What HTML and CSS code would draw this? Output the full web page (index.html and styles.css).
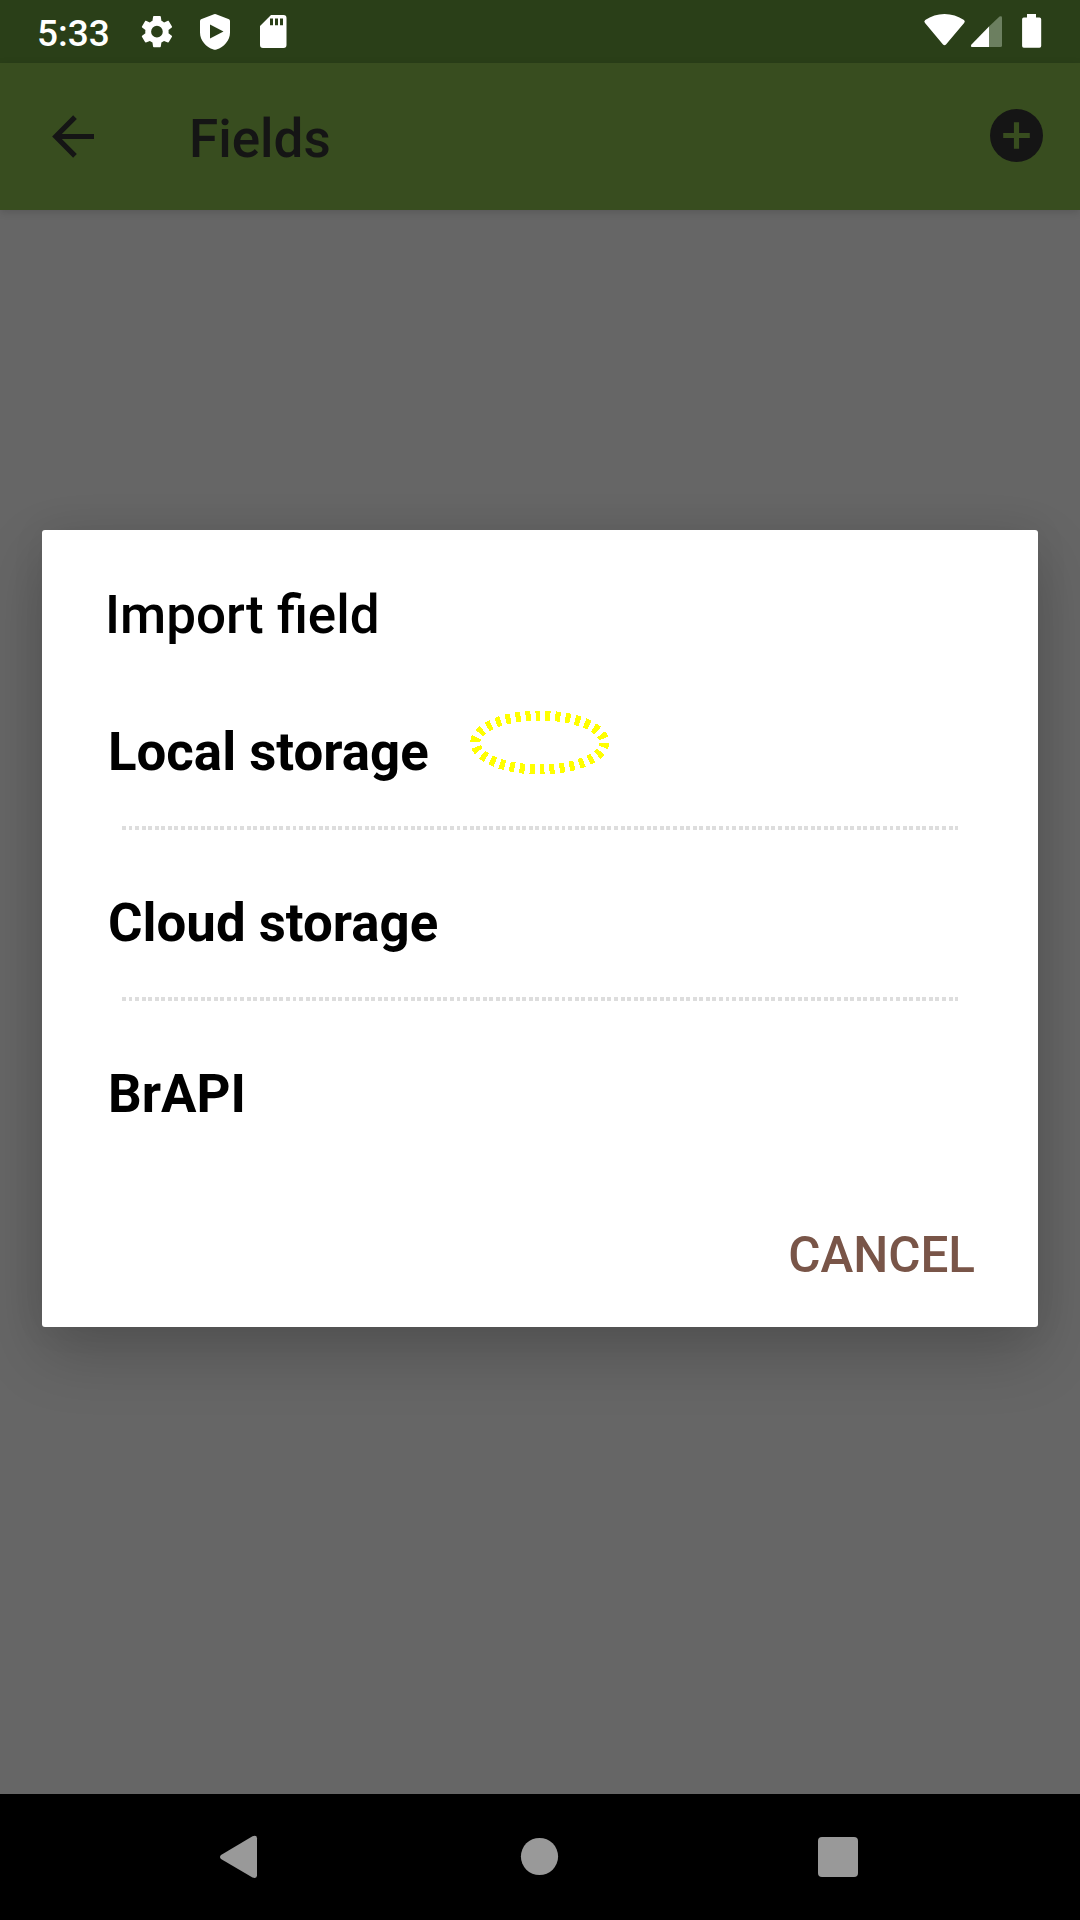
FILE: index.html
```html
<!DOCTYPE html>
<html lang="en">
<head>
<meta charset="utf-8">
<title>Fields</title>
<link rel="stylesheet" href="styles.css">
</head>
<body>
<div class="screen">
  <header class="status">
    <span class="clock">5:33</span>
    <svg class="status-icons" width="160" height="63" viewBox="130 0 160 63">
      <g transform="translate(137.500 12.200) scale(1.62)"><path fill="#fff" d="M19.14 12.94c.04-.3.06-.61.06-.94 0-.32-.02-.64-.07-.94l2.03-1.58c.18-.14.23-.41.12-.61l-1.92-3.32c-.12-.22-.37-.29-.59-.22l-2.39.96c-.5-.38-1.03-.7-1.62-.94l-.36-2.54c-.04-.24-.24-.41-.48-.41h-3.84c-.24 0-.43.17-.47.41l-.36 2.54c-.59.24-1.13.57-1.62.94l-2.39-.96c-.22-.08-.47 0-.59.22L2.74 8.87c-.12.21-.08.47.12.61l2.03 1.58c-.05.3-.09.63-.09.94s.02.64.07.94l-2.03 1.58c-.18.14-.23.41-.12.61l1.92 3.32c.12.22.37.29.59.22l2.39-.96c.5.38 1.03.7 1.62.94l.36 2.54c.05.24.24.41.48.41h3.84c.24 0 .44-.17.47-.41l.36-2.54c.59-.24 1.13-.56 1.62-.94l2.39.96c.22.08.47 0 .59-.22l1.92-3.32c.12-.22.07-.47-.12-.61zM12 15.6A3.6 3.6 0 1 1 12 8.4a3.6 3.6 0 0 1 0 7.2z"/></g>
      <path fill="#fff" fill-rule="evenodd" d="M214 14.2q1-.6 2 0l13 5q1 .6 1 2v11.3c0 8-6 14.500-13.500 17q-1.500.6-3 0C206 47 200 40.500 200 32.500V21.200q0-1.400 1-2zM210 24.500V38.500L223.500 31.500z"/>
      <path fill="#fff" fill-rule="evenodd" d="M271 15h12.500q3 0 3 3v27q0 3-3 3H263q-3 0-3-3V26zM270 18.500V25.300h3V18.500zM275 18.500V25.300h3V18.500zM280 18.500V25.300h3V18.500z"/>
    </svg>
    <svg class="signal-icons" width="160" height="63" viewBox="920 0 160 63">
      <path fill="#fff" d="M925 23q-1.500-1.700.2-3Q934 14 944.500 14T964 20q1.600 1.300.1 3L946 44.500q-1.500 1.500-3 0z"/>
      <path fill="#6c7f60" d="M989 26.500L999.500 16.500q2.500-1 2.500 1V45.500q0 1.500-1.500 1.500H989z"/>
      <path fill="#fff" d="M989 26.500V47H972q-2-.5-.5-2.500z"/>
      <path fill="#fff" d="M1027 14h9v3.500h3.500q1.700 0 1.700 1.700V46q0 1.800-1.700 1.800h-15.700q-1.700 0-1.700-1.800V19.200q0-1.700 1.700-1.700h3.200z"/>
    </svg>
  </header>
  <div class="appbar">
    <svg class="back" width="42" height="42" viewBox="0 0 42 42"><path d="M42 20.500H4.500M23 1.200L3.800 20.500l19.200 19.300" fill="none" stroke="#151515" stroke-width="5.200"/></svg>
    <h1 class="title">Fields</h1>
    <svg class="add" width="53" height="53" viewBox="0 0 53 53"><circle cx="26.500" cy="26.500" r="26.500" fill="#151515"/><path d="M13.200 26.500h26.600M26.500 13.200v26.600" stroke="#384d1f" stroke-width="5.200"/></svg>
  </div>
  <main class="content">
    <section class="dialog">
      <h2 class="dialog-title">Import field</h2>
      <ul class="options">
        <li class="option">Local storage
          <svg class="marker" width="140" height="65" viewBox="470 709.500 140 65"><ellipse cx="539.800" cy="742" rx="64.500" ry="27" fill="none" stroke="#ff0" stroke-width="10" stroke-dasharray="5 5" shape-rendering="crispEdges"/></svg>
        </li>
        <li class="divider"></li>
        <li class="option">Cloud storage</li>
        <li class="divider"></li>
        <li class="option">BrAPI</li>
      </ul>
      <div class="actions"><span class="cancel">CANCEL</span></div>
    </section>
  </main>
  <nav class="navbar">
    <svg width="1080" height="126" viewBox="0 1794 1080 126" fill="#999">
      <path d="M221 1855L252.500 1836.300q4.500-1.500 4.500 2V1875.500q0 3.500-4.500 2L221 1859q-2-2 0-4z"/>
      <circle cx="539.500" cy="1856.500" r="18.600"/>
      <rect x="818" y="1837" width="40" height="40" rx="4"/>
    </svg>
  </nav>
</div>
</body>
</html>
```
FILE: styles.css
```css
* { box-sizing: border-box; margin: 0; padding: 0; }
body { font-family: Roboto, sans-serif; background: #666; }
svg { display: block; }
.screen { width: 1080px; height: 1920px; display: flex; flex-direction: column; overflow: hidden; }
.status { height: 63px; background: #2a3f18; display: flex; }
.clock { width: 130px; padding-left: 37px; color: #fff; font-size: 37px; font-weight: 500; line-height: 67px; }
.signal-icons { margin-left: auto; }
.appbar { height: 147px; background: #384d1f; display: flex; align-items: center; padding: 0 37px 0 53px; z-index: 1; box-shadow: 0 2px 8px rgba(0, 0, 0, .14); }
.title { margin: 4px 0 0 94px; font-size: 53px; font-weight: 500; line-height: 62px; color: #151515; }
.back { overflow: visible; margin-left: -1px; margin-right: 1px; }
.add { margin: -2px 0 0 auto; }
.content { flex: 1; padding: 320px 42px 0; }
.dialog { height: 797px; background: #fff; border-radius: 3px; padding: 54px 63px 0; box-shadow: 0 26px 64px rgba(0, 0, 0, .2), 0 0 36px rgba(0, 0, 0, .06); }
.dialog-title { font-size: 53px; font-weight: 500; line-height: 62px; }
.options { list-style: none; margin-top: 13px; }
.option { height: 167px; display: flex; align-items: center; padding: 18px 0 0 3px; font-size: 52.8px; font-weight: 700; }
.marker { margin: -19px 0 0 41px; }
.divider { height: 4px; margin: 0 17px; background: repeating-linear-gradient(90deg, #ddd 0 3.94px, transparent 3.94px 6.56px); }
.actions { display: flex; justify-content: flex-end; margin-top: 57px; }
.cancel { font-size: 49.4px; font-weight: 500; line-height: 60px; color: #795548; }
.navbar { height: 126px; background: #000; }
```
